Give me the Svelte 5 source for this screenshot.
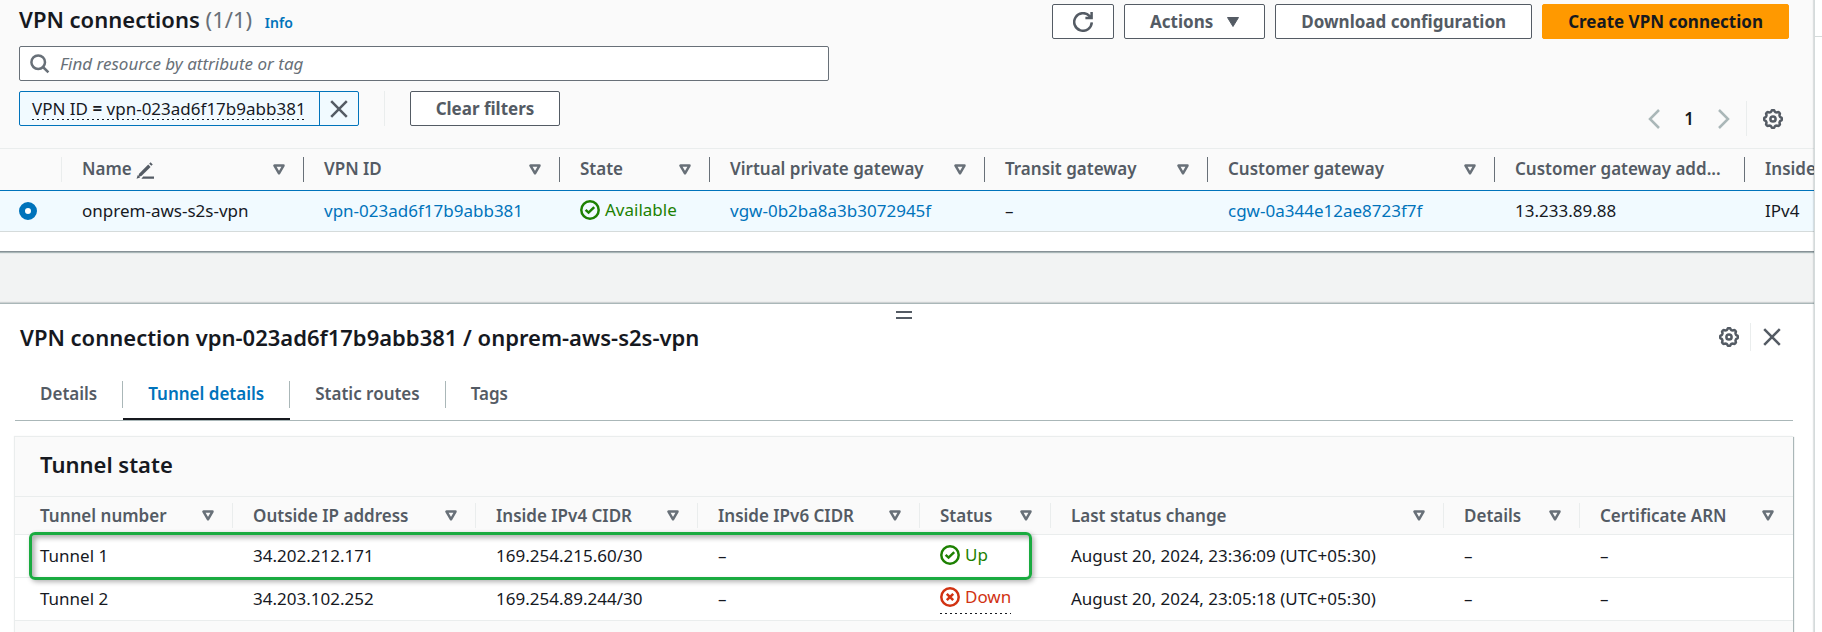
<script>
  const connectionColumns = [
    { label: 'Name', width: 242, editable: true, sortable: true },
    { label: 'VPN ID', width: 256, sortable: true },
    { label: 'State', width: 150, sortable: true },
    { label: 'Virtual private gateway', width: 275, sortable: true },
    { label: 'Transit gateway', width: 223, sortable: true },
    { label: 'Customer gateway', width: 287, sortable: true },
    { label: 'Customer gateway add...', width: 250 },
    { label: 'Inside', width: 160 }
  ];

  const tunnelColumns = [
    { label: 'Tunnel number', width: 218 },
    { label: 'Outside IP address', width: 243 },
    { label: 'Inside IPv4 CIDR', width: 222 },
    { label: 'Inside IPv6 CIDR', width: 222 },
    { label: 'Status', width: 131 },
    { label: 'Last status change', width: 393 },
    { label: 'Details', width: 136 },
    { label: 'Certificate ARN', width: 213 }
  ];

  const tunnels = [
    { name: 'Tunnel 1', ip: '34.202.212.171', v4: '169.254.215.60/30', up: true, changed: 'August 20, 2024, 23:36:09 (UTC+05:30)' },
    { name: 'Tunnel 2', ip: '34.203.102.252', v4: '169.254.89.244/30', up: false, changed: 'August 20, 2024, 23:05:18 (UTC+05:30)' }
  ];

  const tabs = ['Details', 'Tunnel details', 'Static routes', 'Tags'];
  let activeTab = $state('Tunnel details');
  let query = $state('');
  let selected = $state('vpn-023ad6f17b9abb381');

  // Eight-lobed outline of the settings cog, centred in a 20 unit box.
  const cog =
    Array.from({ length: 96 }, (_, i) => {
      const a = (i / 96) * Math.PI * 2;
      const r = 8.1 + 0.8 * Math.tanh(2 * Math.cos(8 * a));
      return `${i ? 'L' : 'M'}${(10 + r * Math.cos(a)).toFixed(2)} ${(10 + r * Math.sin(a)).toFixed(2)}`;
    }).join('') + 'Z';
</script>

{#snippet gear()}
  <svg class="icon" viewBox="0 0 20 20" aria-hidden="true">
    <path d={cog} />
    <circle cx="10" cy="10" r="2.6" />
  </svg>
{/snippet}

{#snippet close()}
  <svg class="icon" viewBox="0 0 20 20" aria-hidden="true"><path d="M2.2 2.2l15.6 15.6M17.8 2.2L2.2 17.8" /></svg>
{/snippet}

{#snippet sort()}
  <svg class="sort" viewBox="0 0 12 11" aria-hidden="true"><path d="M1.5 1.6h9L6 9.3z" /></svg>
{/snippet}

{#snippet check()}
  <svg class="icon" viewBox="0 0 20 20" aria-hidden="true">
    <circle cx="10" cy="10" r="8.7" />
    <path d="M5.6 9.8l3 2.8 5.6-5.4" />
  </svg>
{/snippet}

{#snippet cross()}
  <svg class="icon" viewBox="0 0 20 20" aria-hidden="true">
    <circle cx="10" cy="10" r="8.7" />
    <path d="M6.8 6.8l6.4 6.4M13.2 6.8l-6.4 6.4" />
  </svg>
{/snippet}

<div class="page">
  <main>
    <section class="connections">
      <header class="toolbar">
        <h1>VPN connections <span class="count">(1/1)</span> <a class="info" href="#info">Info</a></h1>
        <div class="actions">
          <button class="btn refresh" aria-label="Refresh">
            <svg class="icon" viewBox="0 0 20 20" aria-hidden="true">
              <path d="M18.8 10.4A8.8 8.8 0 1 1 16.4 3.9L18.4 5.6M18.6 0V6H12.4" />
            </svg>
          </button>
          <button class="btn">Actions
            <svg class="caret" viewBox="0 0 12 10" aria-hidden="true"><path d="M0.5 0.5h11L6 9.5z" /></svg>
          </button>
          <button class="btn">Download configuration</button>
          <button class="btn primary">Create VPN connection</button>
        </div>
      </header>

      <label class="search">
        <svg class="icon" viewBox="0 0 20 20" aria-hidden="true">
          <circle cx="8.2" cy="8.2" r="6.8" /><path d="M13 13l5.4 5.4" />
        </svg>
        <input type="text" aria-label="Find resource" placeholder="Find resource by attribute or tag" bind:value={query} />
      </label>

      <div class="filters">
        <div class="token">
          <button class="token-text"><span class="dotted">VPN ID <b>=</b> vpn-023ad6f17b9abb381</span></button>
          <button class="token-close" aria-label="Remove filter">{@render close()}</button>
        </div>
        <div class="rule"></div>
        <button class="btn">Clear filters</button>
        <nav class="pages" aria-label="Pagination">
          <button class="plain" aria-label="Previous page" disabled>
            <svg class="chevron" viewBox="0 0 12 20" aria-hidden="true"><path d="M11 1L2 10l9 9" /></svg>
          </button>
          <button class="plain page-number">1</button>
          <button class="plain" aria-label="Next page" disabled>
            <svg class="chevron" viewBox="0 0 12 20" aria-hidden="true"><path d="M1 1l9 9-9 9" /></svg>
          </button>
          <div class="rule"></div>
          <button class="plain" aria-label="Preferences">{@render gear()}</button>
        </nav>
      </div>

      <div class="scroller">
        <table class="vpn-table">
          <colgroup>
            <col style="width: 62px" />
            {#each connectionColumns as c}<col style="width: {c.width}px" />{/each}
          </colgroup>
          <thead>
            <tr>
              <th class="select" aria-label="Selection"></th>
              {#each connectionColumns as c}
                <th>
                  <div class="head">
                    <span>{c.label}</span>
                    {#if c.editable}
                      <svg class="pencil" viewBox="0 0 20 20" aria-hidden="true">
                        <path d="M3.4 14.2L13.6 4l2.6 2.6L6 16.8l-3.6 1z" />
                        <path d="M14.6 3l1.6-1.6 2.4 2.4L17 5.4z" />
                        <path d="M0.6 19.6l1.4-4 2.6 2.6zM8 17.2h12v2.4H6z" />
                      </svg>
                    {/if}
                    {#if c.sortable}{@render sort()}{/if}
                  </div>
                </th>
              {/each}
            </tr>
          </thead>
          <tbody>
            <tr>
              <td class="select"><input type="radio" name="vpn" value="vpn-023ad6f17b9abb381" aria-label="onprem-aws-s2s-vpn" bind:group={selected} /></td>
              <td>onprem-aws-s2s-vpn</td>
              <td><a href="#vpn">vpn-023ad6f17b9abb381</a></td>
              <td><span class="status good">{@render check()}Available</span></td>
              <td><a href="#vgw">vgw-0b2ba8a3b3072945f</a></td>
              <td>–</td>
              <td><a href="#cgw">cgw-0a344e12ae8723f7f</a></td>
              <td>13.233.89.88</td>
              <td>IPv4</td>
            </tr>
          </tbody>
        </table>
      </div>
    </section>

    <section class="split">
      <button class="handle" aria-label="Resize panel"><i></i><i></i></button>
      <header class="split-head">
        <h2>VPN connection vpn-023ad6f17b9abb381 / onprem-aws-s2s-vpn</h2>
        <div class="split-tools">
          <button class="plain" aria-label="Panel preferences">{@render gear()}</button>
          <div class="rule"></div>
          <button class="plain" aria-label="Close panel">{@render close()}</button>
        </div>
      </header>

      <div class="tabs" role="tablist">
        {#each tabs as tab}
          <button role="tab" aria-selected={tab === activeTab} class:active={tab === activeTab} onclick={() => (activeTab = tab)}>
            <span>{tab}</span>
          </button>
        {/each}
      </div>

      <div class="card">
        <h2>Tunnel state</h2>
        <table class="tunnel-table">
          <colgroup>
            {#each tunnelColumns as c}<col style="width: {c.width}px" />{/each}
          </colgroup>
          <thead>
            <tr>
              {#each tunnelColumns as c}
                <th><div class="head"><span>{c.label}</span>{@render sort()}</div></th>
              {/each}
            </tr>
          </thead>
          <tbody>
            {#each tunnels as t}
              <tr>
                <td>{t.name}</td>
                <td>{t.ip}</td>
                <td>{t.v4}</td>
                <td>–</td>
                <td>
                  {#if t.up}
                    <span class="status good">{@render check()}Up</span>
                  {:else}
                    <button class="status bad dotted">{@render cross()}Down</button>
                  {/if}
                </td>
                <td>{t.changed}</td>
                <td>–</td>
                <td>–</td>
              </tr>
            {/each}
          </tbody>
        </table>
        <div class="highlight"></div>
      </div>
    </section>
  </main>
  <aside></aside>
</div>

<style>
  :global(body) {
    margin: 0;
    overflow: hidden;
  }
  .page {
    display: flex;
    height: 100vh;
    overflow: hidden;
    background: #fff;
    color: #16191f;
    font: 17px/20px 'Noto Sans', sans-serif;
  }
  main {
    flex: 1;
    min-width: 0;
    display: flex;
    flex-direction: column;
    background: #f2f3f3;
  }
  aside {
    width: 8px;
    box-sizing: border-box;
    border-left: 1px solid #d5dbdb;
    background: linear-gradient(#d5dbdb, #d5dbdb) 0 36px / 100% 1px no-repeat #fff;
    box-shadow: -1px 0 1px rgba(0, 28, 36, 0.12);
    z-index: 1;
  }
  button,
  input {
    font: inherit;
    color: inherit;
    margin: 0;
  }
  button {
    padding: 0;
    border: 0;
    background: none;
  }
  a {
    color: #0073bb;
    text-decoration: none;
  }
  h1,
  h2 {
    margin: 0;
    font-size: 22px;
    line-height: 28px;
    font-weight: 600;
    white-space: nowrap;
  }
  svg {
    display: block;
    flex: none;
    fill: none;
    stroke: currentColor;
    stroke-width: 2.5;
  }
  .icon {
    width: 20px;
    height: 20px;
  }
  .dotted {
    background: repeating-linear-gradient(90deg, #16191f 0 2px, transparent 2px 5px) 0 100% / 100% 1px no-repeat;
  }

  .connections {
    background: linear-gradient(#fafafa, #fafafa) 0 0 / 100% 148px no-repeat #fff;
    border-bottom: 1px solid #879196;
    box-shadow: 0 1px 1px #aab7b8;
    padding-bottom: 19px;
    margin-bottom: 51px;
  }
  .toolbar {
    display: flex;
    justify-content: space-between;
    padding: 4px 25px 7px 19px;
  }
  h1 {
    margin-top: 1px;
  }
  .count {
    font-weight: 400;
    color: #687078;
  }
  .info {
    font-size: 14px;
    margin-left: 7px;
  }
  .actions {
    display: flex;
    gap: 10px;
  }
  .btn {
    display: flex;
    align-items: center;
    justify-content: center;
    gap: 14px;
    box-sizing: border-box;
    height: 35px;
    padding: 0 25px;
    border: 1px solid #545b64;
    border-radius: 2px;
    background: #fff;
    color: #545b64;
    font-weight: 700;
    white-space: nowrap;
  }
  .refresh {
    padding: 0 20px;
  }
  .primary {
    border-color: #ff9900;
    background: #ff9900;
    color: #16191f;
  }
  .caret {
    width: 12px;
    height: 10px;
    fill: currentColor;
    stroke-width: 1;
  }
  .search {
    display: flex;
    align-items: center;
    gap: 10px;
    box-sizing: border-box;
    height: 35px;
    padding: 0 10px;
    margin-left: 19px;
    max-width: 810px;
    border: 1px solid #687078;
    border-radius: 2px;
    background: #fff;
    color: #687078;
  }
  .search input {
    flex: 1;
    min-width: 0;
    padding: 0;
    border: 0;
    outline: 0;
    background: none;
  }
  .search input::placeholder {
    color: #687078;
    opacity: 1;
    font-style: italic;
  }
  .filters {
    display: flex;
    gap: 25px;
    padding: 10px 31px 12px 19px;
  }
  .token {
    display: flex;
    box-sizing: border-box;
    height: 35px;
    border: 1px solid #0073bb;
    border-radius: 2px;
    background: #f1faff;
    white-space: nowrap;
  }
  .token-text {
    padding: 0 13px 0 12px;
  }
  .token-text span {
    display: block;
    line-height: 22px;
  }
  .token-text b {
    font-weight: 600;
  }
  .token-close {
    padding: 0 9px;
    border-left: 1px solid #0073bb;
    color: #545b64;
  }
  .rule {
    width: 1px;
    height: 35px;
    background: #eaeded;
  }
  .pages {
    display: flex;
    align-items: center;
    margin: 10px 0 0 auto;
    color: #545b64;
  }
  .pages .plain {
    width: 20px;
    display: flex;
    justify-content: center;
  }
  .pages .page-number {
    margin: 0 15px;
    font-weight: 600;
    color: #16191f;
  }
  .chevron {
    width: 12px;
    height: 20px;
    color: #aab7b8;
  }
  .pages .rule {
    margin: 0 16px 0 12px;
  }

  .scroller {
    overflow: hidden;
    border-top: 1px solid #eaeded;
  }
  table {
    width: 100%;
    table-layout: fixed;
    border-collapse: separate;
    border-spacing: 0;
  }
  .vpn-table {
    width: 1905px;
  }
  th,
  td {
    box-sizing: border-box;
    padding: 0 0 0 20px;
    text-align: left;
    white-space: nowrap;
    font-weight: 400;
  }
  th {
    background: #fafafa;
    color: #545b64;
    font-weight: 600;
  }
  .vpn-table th {
    height: 42px;
    border-bottom: 1px solid #0073bb;
  }
  .vpn-table td {
    height: 41px;
    background: #f1faff;
    border-bottom: 1px solid #d5dbdb;
  }
  .vpn-table td.select {
    padding-left: 19px;
  }
  .head {
    display: flex;
    align-items: center;
    height: 25px;
    padding-right: 18px;
    border-right: 1px solid #687078;
  }
  .vpn-table .head span {
    line-height: 24px;
    padding-bottom: 1px;
  }
  th.select::after {
    content: '';
    display: block;
    height: 25px;
    border-right: 1px solid #eaeded;
  }
  .sort {
    width: 12px;
    height: 11px;
    margin-left: auto;
    color: #687078;
    stroke-linejoin: round;
  }
  .pencil {
    width: 18px;
    height: 18px;
    margin-left: 4px;
    fill: currentColor;
    stroke: none;
  }
  td input {
    display: block;
    appearance: none;
    width: 18px;
    height: 18px;
    box-sizing: border-box;
    border: 6px solid #0073bb;
    border-radius: 50%;
    background: #fff;
  }
  .status {
    display: inline-flex;
    align-items: center;
    gap: 5px;
    vertical-align: middle;
    padding-bottom: 2px;
  }
  .good {
    color: #1d8102;
  }
  .bad {
    color: #d13212;
    padding: 2px 0 7px;
  }

  .split {
    flex: 1;
    display: flex;
    flex-direction: column;
    background: #fff;
    border-top: 1px solid #aab7b8;
    box-shadow: 0 -1px 1px rgba(0, 28, 36, 0.15);
    padding: 0 21px 0 15px;
  }
  .handle {
    display: grid;
    gap: 4px;
    align-self: center;
    padding: 7px 0 4px;
  }
  .handle i {
    width: 16px;
    height: 2px;
    background: #545b64;
  }
  .split-head {
    display: flex;
    justify-content: space-between;
    padding: 0 11px 0 5px;
  }
  .split-tools {
    display: flex;
    align-items: center;
    gap: 11px;
    height: 28px;
    color: #545b64;
  }
  .split-tools .rule {
    height: 28px;
  }
  .tabs {
    display: flex;
    margin-top: 24px;
    border-bottom: 1px solid #aab7b8;
  }
  .tabs button {
    height: 45px;
    padding: 6px 0 10px;
    box-sizing: border-box;
    font-weight: 600;
    color: #545b64;
    border-bottom: 2px solid transparent;
  }
  .tabs span {
    display: block;
    padding: 3px 25px 4px;
    border-right: 1px solid #aab7b8;
  }
  .tabs button:last-child span {
    border: 0;
  }
  .tabs .active {
    color: #0073bb;
    border-color: #16191f;
  }
  .card {
    position: relative;
    flex: 1;
    margin-top: 15px;
    background: #fafafa;
    border-top: 1px solid #eaeded;
    box-shadow: 1px 1px 1px #aab7b8, -1px 0 1px #eaeded;
  }
  .card h2 {
    padding: 13px 25px 18px;
    border-bottom: 1px solid #eaeded;
  }
  .tunnel-table th {
    height: 38px;
    border-bottom: 1px solid #eaeded;
  }
  .tunnel-table .head {
    border-color: #eaeded;
  }
  .tunnel-table th:first-child,
  .tunnel-table td:first-child {
    padding-left: 25px;
  }
  .tunnel-table th:last-child .head {
    border: 0;
    padding-right: 19px;
  }
  .tunnel-table td {
    height: 43px;
    background: #fff;
    border-bottom: 1px solid #eaeded;
  }
  .highlight {
    position: absolute;
    left: 14px;
    top: 95px;
    width: 1003px;
    height: 48px;
    box-sizing: border-box;
    border: 3px solid #1aab40;
    border-radius: 6px;
    box-shadow: 2px 2px 5px rgba(0, 0, 0, 0.3), inset 3px 3px 5px rgba(0, 0, 0, 0.3);
    pointer-events: none;
  }
</style>
